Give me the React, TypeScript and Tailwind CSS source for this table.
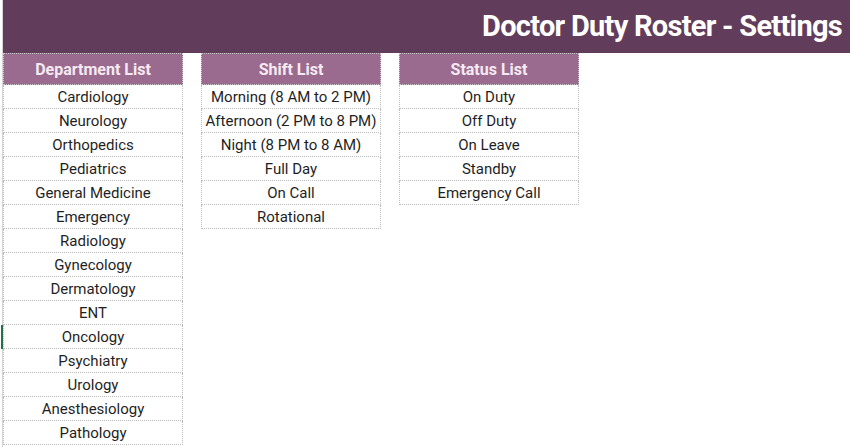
import React from 'react';

const departments = [
  'Cardiology',
  'Neurology',
  'Orthopedics',
  'Pediatrics',
  'General Medicine',
  'Emergency',
  'Radiology',
  'Gynecology',
  'Dermatology',
  'ENT',
  'Oncology',
  'Psychiatry',
  'Urology',
  'Anesthesiology',
  'Pathology',
];

const shifts = [
  'Morning (8 AM to 2 PM)',
  'Afternoon (2 PM to 8 PM)',
  'Night (8 PM to 8 AM)',
  'Full Day',
  'On Call',
  'Rotational',
];

const statuses = ['On Duty', 'Off Duty', 'On Leave', 'Standby', 'Emergency Call'];

const ListTable: React.FC<{ title: string; items: string[] }> = ({ title, items }) => (
  <div className="w-[180px] flex flex-col">
    <div className="h-[32px] pt-px bg-[#9b6b8f] border border-dotted border-[#c9c9c9] flex items-center justify-center text-[16px] font-bold text-[#f6eaf2]">
      {title}
    </div>
    {items.map((item) => (
      <div
        key={item}
        className="h-[24px] pt-[2px] border border-t-0 border-dotted border-[#bdbdbd] flex items-center justify-center text-[15px] text-[#1f1f1f]"
      >
        {item}
      </div>
    ))}
  </div>
);

export default function App() {
  return (
    <div className="w-[850px] h-[447px] bg-white overflow-hidden font-['Roboto',sans-serif]">
      <div className="flex h-[53px]">
        <div className="w-[3px] border-r border-[#d4d4d4]" />
        <div className="flex-1 bg-[#613d5b] flex items-center justify-end pr-[8px]">
          <h1 className="text-[29px] font-bold text-white tracking-tight">Doctor Duty Roster - Settings</h1>
        </div>
      </div>
      <div className="flex">
        <div className="w-[3px] h-[394px] border-r border-[#d4d4d4] flex flex-col">
          <div className="h-[272px]" />
          <div className="h-[24px] border-r-2 border-[#217346] -mr-[1px]" />
        </div>
        <div className="flex gap-[18px]">
          <ListTable title="Department List" items={departments} />
          <ListTable title="Shift List" items={shifts} />
          <ListTable title="Status List" items={statuses} />
        </div>
      </div>
    </div>
  );
}
